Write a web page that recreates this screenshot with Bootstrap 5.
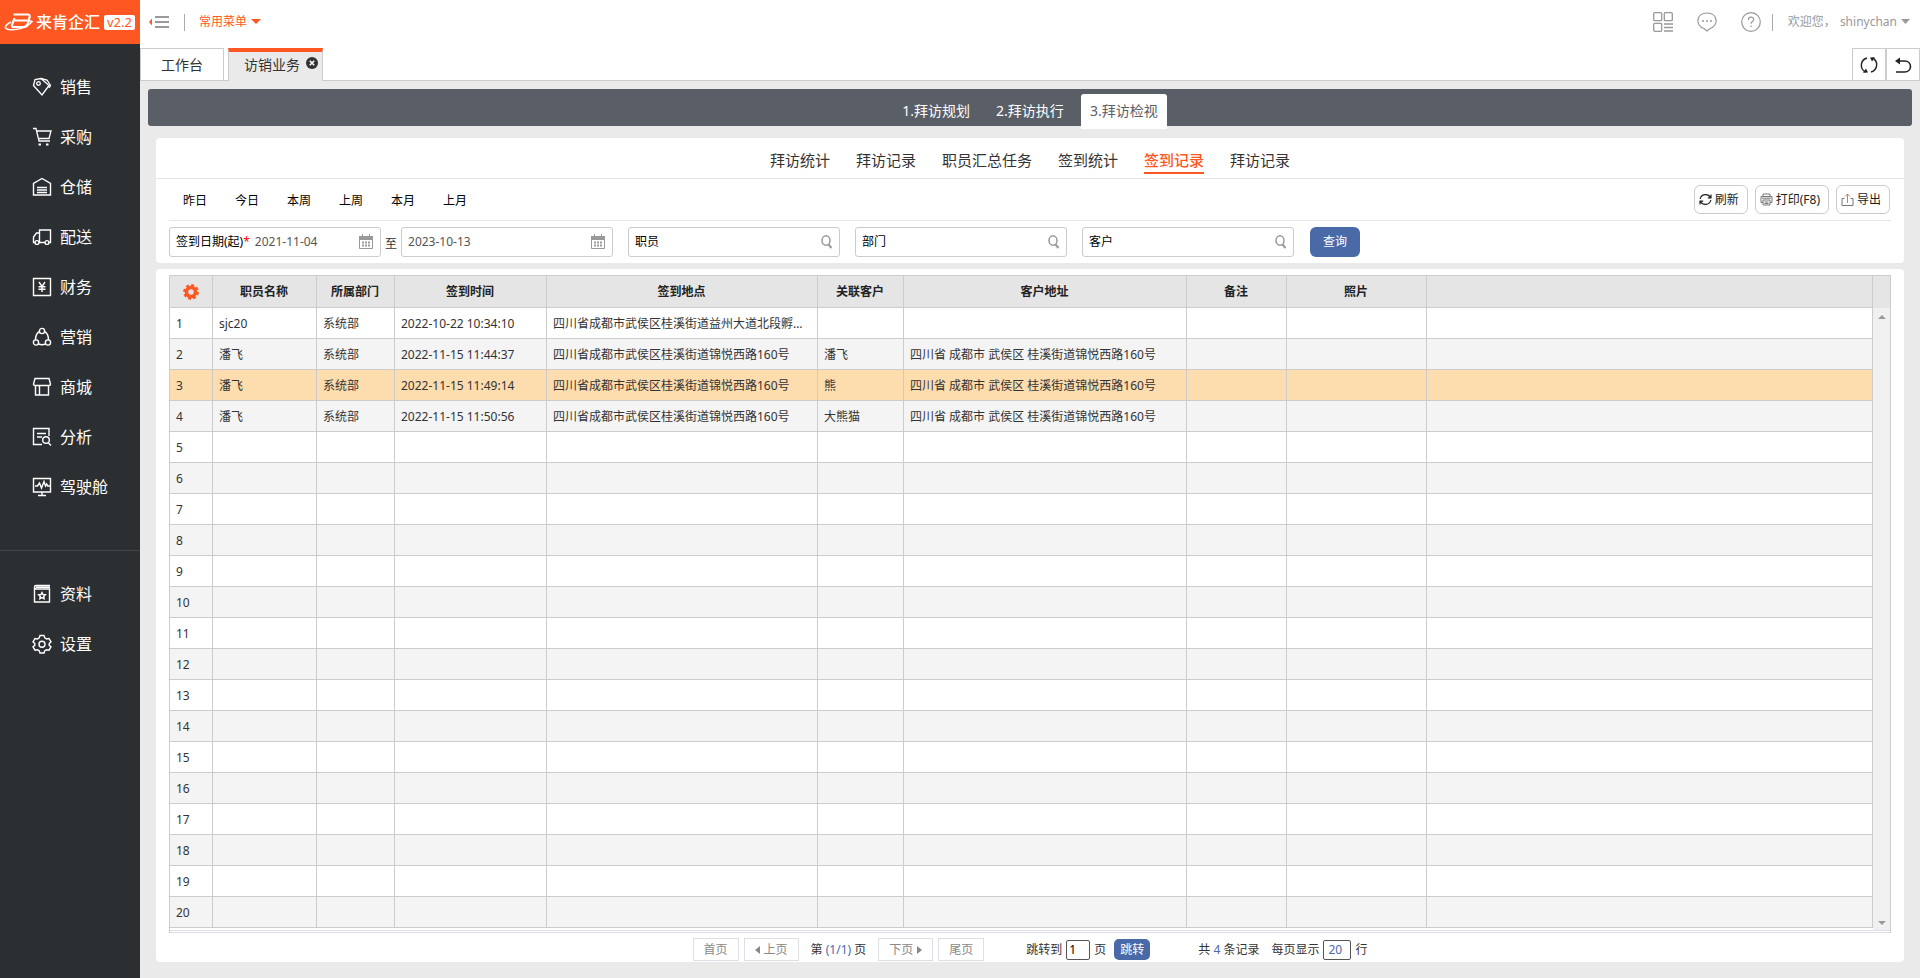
<!DOCTYPE html>
<html lang="zh-CN">
<head>
<meta charset="utf-8">
<meta name="viewport" content="width=device-width, initial-scale=1">
<title>签到记录</title>
<link href="https://cdn.jsdelivr.net/npm/bootstrap@5.3.0/dist/css/bootstrap.min.css" rel="stylesheet">
<style>
:root{--brand:#ff5722;--line:#ccc;--blue:#4a69a7}
body{font-family:"Noto Sans","Noto Sans CJK SC",sans-serif;font-size:12px;line-height:18px;color:#333;background:#eaeaea}
a{color:inherit;text-decoration:none}
svg{display:block;flex:none;fill:none;stroke:currentColor}
.side{width:140px;background:#2b2f32;color:#fff}
.logo{height:44px;background:var(--brand);padding:0 4px 0 4px;white-space:nowrap}
.logo-name{font-size:16px;font-weight:500;margin-left:2px}
.ver{background:#fff;color:var(--brand);border-radius:2px;padding:0 3px;line-height:15px;font-size:13px;margin-left:4px}
.side .nav-link{height:50px;padding:0 0 0 32px;gap:8px;color:#fff;font-size:16px;line-height:24px}
.side-main{padding:18px 0 38px}
.side-extra{border-top:1px solid #414548;padding-top:18px}
.topbar{height:48px;background:#fff;padding:0 10px 12px 9px}
.vr-line{width:1px;height:17px;background:#aaa}
.menu-sep{margin:0 14px 0 15px}
.user-sep{margin:0 15px 0 11px}
.common-menu{color:var(--brand)}
.head-tools{color:#999}
.tabs{height:33px;background:#fff;border-bottom:1px solid var(--line)}
.page-tab{height:33px;font-size:14px;border:1px solid var(--line);color:#333;padding:0 20px}
.page-tab.current{border-top:4px solid var(--brand);border-bottom:0;background:#eaeaea;padding:0 4px 3px 15px;gap:6px}
.tool{width:34px;height:33px;background:#fff;border:1px solid var(--line);padding:0;color:#222}
.steps{height:37px;background:#5a5e66;border-radius:3px;margin:8px 8px 12px;padding-top:5px;color:#fff;font-size:14px}
.steps a{height:32px;line-height:34px;padding:0 9px}
.steps a.current{height:35px;background:#fff;color:#5a5e66;border-radius:3px 3px 0 0}
.panel{background:#fff;border-radius:4px;margin:0 16px}
.subtabs{height:41px;gap:26px;border-bottom:1px solid #e4e4e4;padding-top:12px;font-size:15px}
.subtabs a{height:24px;line-height:20px}
.subtabs a.current{color:var(--brand);font-weight:500;border-bottom:2px solid var(--brand)}
.filters{padding:0 13px 6px}
.quick{height:42px;border-bottom:1px solid #e4e4e4;color:#000;padding:0 1px 0 14px}
.quick-days{gap:28px;padding-top:2px}
.quick-tools{gap:7px}
.query{padding-top:6px}
.tbtn{height:29px;border:1px solid var(--line);border-radius:6px;background:#fff;padding:0 8px 0 4px;gap:3px;color:#222}
.field{width:212px;height:30px;border:1px solid var(--line);border-radius:3px;padding:0 6px;gap:5px;color:#000}
.field svg{color:#999}
.field input{min-width:0;border:0;padding:0;color:#555;outline:0;line-height:18px;background:none}
.lookups{gap:15px;margin-left:15px}
.star{color:#f00}
.go{height:30px;width:50px;background:var(--blue);color:#fff;border:0;border-radius:6px;padding:0}
.grid-panel{padding:6px 13px 1px;margin-top:6px}
.grid-box{border:1px solid var(--line);border-width:1px 1px 0}
.grid-wrap{padding-bottom:2px}
.grid{table-layout:fixed;border-collapse:separate;border-spacing:0;width:100%;line-height:18px}
.grid th,.grid td{height:31px;padding:1px 7px 0 6px;border:solid var(--line);border-width:0 1px 1px 0;overflow:hidden;white-space:nowrap;text-overflow:ellipsis}
.grid th{height:32px;background:#e5e5e5;text-align:center;color:#222;font-weight:700}
.grid tbody tr:nth-child(even){background:#f4f4f4}
.grid tbody tr.picked{background:#fddcae}
.cog{color:var(--brand)}
.gutter{width:17px;flex:none;background:#f0f0f0;border-top:32px solid #e5e5e5;padding:7px 0 5px;color:#999}
.rails{height:3px;border:solid #dcdfe6;border-width:1px 0}
.pager{padding-top:5px;color:#333}
.pg{height:23px;border:1px solid #dcdfe6;background:#fff;color:#888;padding:0 10px;gap:4px}
.gap-s{margin-right:5px}
.page-no{margin:0 12px}
.jump-label{margin:0 4px 0 42px}
.num{border:1px solid #555;border-radius:2px;height:20px;padding:0 2px;background:#fff}
.num-page{width:24px}
.num-size{width:28px;padding-left:4px}
.jump{width:36px;height:21px;border:0;border-radius:5px;background:var(--blue);color:#fff;padding:0}
.ink{color:var(--blue)}
</style>
</head>
<body>
<div class="d-flex min-vh-100">
<aside class="side flex-shrink-0">
  <div class="logo d-flex align-items-center">
    <svg width="30" height="20" viewBox="0 0 30 20" stroke-width="2.2"><path d="M9.500 2.500h14q3 0 2 3l-2 7q-1 2.500-4 2.500h-10q-2 0-1.500-2l2.500-7M10 8.500h14"/><path stroke-width="1.500" d="M7 10c-6 3-8 6.500-2 7.500 6 .8 17-.5 23-8l-3-1"/></svg>
    <span class="logo-name">来肯企汇</span><span class="ver">v2.2</span>
  </div>
  <nav>
    <div class="side-main">
      <a class="nav-link d-flex align-items-center" href="#"><svg width="20" height="20" viewBox="0 0 20 20" stroke-width="1.300"><path d="M1.500 8.500 3 2.500l6-1 8 7-7 9.500z"/><path d="m9 1.500 6 1.500 3.500 5.500-1.500 2.500"/><circle cx="6.500" cy="6.500" r="1.800"/></svg>销售</a>
      <a class="nav-link d-flex align-items-center" href="#"><svg width="20" height="20" viewBox="0 0 20 20" stroke-width="1.300"><path d="M1 1.500h3L7 14h11M4.800 4H19l-2 7.500H6.500"/><path stroke-width="2" d="M6.500 17.500h2.500M14 17.500h2.500"/></svg>采购</a>
      <a class="nav-link d-flex align-items-center" href="#"><svg width="20" height="20" viewBox="0 0 20 20" stroke-width="1.400"><path d="M1.500 18V6.500L10 1.500l8.500 5V18zM5 10.500h10M5 13h10M5 15.500h10"/></svg>仓储</a>
      <a class="nav-link d-flex align-items-center" href="#"><svg width="20" height="20" viewBox="0 0 20 20" stroke-width="1.400"><path d="M7.500 15.500V3h11v12.500h-1.500M7.500 6h-3L1.500 10v5.500h1.500M7 15.500h6"/><circle cx="5" cy="15.500" r="1.900"/><circle cx="15" cy="15.500" r="1.900"/></svg>配送</a>
      <a class="nav-link d-flex align-items-center" href="#"><svg width="20" height="20" viewBox="0 0 20 20" stroke-width="1.400"><path d="M1.500 1.500h17v17h-17zM7 5l3 4.500L13 5M10 9.500V15M6.500 9.700h7M6.500 12.300h7"/></svg>财务</a>
      <a class="nav-link d-flex align-items-center" href="#"><svg width="20" height="20" viewBox="0 0 20 20" stroke-width="1.400"><circle cx="10" cy="4" r="2.600"/><circle cx="4" cy="15.500" r="2.600"/><circle cx="16" cy="15.500" r="2.600"/><path d="M7.500 4.500C4.500 6 3.500 9 3.500 13M12.500 4.500c3 1.500 4 4.500 4 8.500M6.500 17q3.500 1.500 7 0"/></svg>营销</a>
      <a class="nav-link d-flex align-items-center" href="#"><svg width="20" height="20" viewBox="0 0 20 20" stroke-width="1.400"><path d="M3 1.500h14l1.500 5.500q0 1.500-1.500 1.500H3Q1.500 8.500 1.500 7zM3.500 8.500v9.500h13V8.500M7.500 8.500V18"/></svg>商城</a>
      <a class="nav-link d-flex align-items-center" href="#"><svg width="20" height="20" viewBox="0 0 20 20" stroke-width="1.400"><path d="M10 17.500H1.500v-16h15.500V9M5 6.500h9M5 10h5"/><circle cx="14" cy="13" r="3.300"/><path d="m16 15.500 3 3"/></svg>分析</a>
      <a class="nav-link d-flex align-items-center" href="#"><svg width="20" height="20" viewBox="0 0 20 20" stroke-width="1.400"><path d="M1.500 1.500h17V15h-17zM6 18.500h8M10 15v3.500M3 9h2.500L7.500 6 9.500 11 12 4.500 13.500 9l1.200-2 1 2H18"/></svg>驾驶舱</a>
    </div>
    <div class="side-extra">
      <a class="nav-link d-flex align-items-center" href="#"><svg width="20" height="20" viewBox="0 0 20 20" stroke-width="1.400"><path d="M18 1.500H4q-1.500 0-1.500 1.500t1.500 2h13.500V18h-15V3M4 3.200h14"/><path d="m10 8.500 1 2 2.300.3-1.600 1.600.4 2.300-2.100-1.100-2.100 1.100.4-2.300-1.600-1.600 2.300-.3z"/></svg>资料</a>
      <a class="nav-link d-flex align-items-center" href="#"><svg width="20" height="20" viewBox="0 0 20 20" stroke-width="1.400"><path d="M8 1.500h4l.8 2.400 1.700 1L17 4.500l2 3.300L17.200 9.500v1.800l1.800 1.500-2 3.400-2.500-.5-1.700 1-.8 2.300H8l-.8-2.300-1.700-1-2.500.5-2-3.400 1.800-1.500V9.500L1 7.800l2-3.300 2.500.4 1.700-1z"/><circle cx="10" cy="10.200" r="3"/></svg>设置</a>
    </div>
  </nav>
</aside>
<div class="flex-grow-1 overflow-hidden">
  <header class="topbar d-flex align-items-center">
    <div class="d-flex align-items-center pt-2">
      <a href="#" aria-label="收起菜单"><svg width="20" height="14" viewBox="0 0 20 14"><path stroke="#999" stroke-width="2" d="M6 2h14M6 7h14M6 12h14"/><path fill="#ff5722" stroke="none" d="M3 3.500v7L0 7z"/></svg></a>
      <span class="vr-line menu-sep"></span>
      <a href="#" class="common-menu d-flex align-items-center gap-1">常用菜单<svg width="10" height="6"><path fill="currentColor" stroke="none" d="M0 0h10L5 5z"/></svg></a>
    </div>
    <div class="head-tools d-flex align-items-center ms-auto pt-2">
      <a href="#" aria-label="应用" class="me-4"><svg width="20" height="20" stroke-width="1.300"><rect x=".7" y=".7" width="8" height="8" rx="1"/><rect x="11.300" y=".7" width="8" height="8" rx="1"/><rect x=".7" y="11.300" width="8" height="8" rx="1"/><path d="M11 12h9M11 15.500h9M11 19h9"/></svg></a>
      <a href="#" aria-label="消息" class="me-4"><svg width="20" height="20" stroke-width="1.200"><path d="M7 16.500C-2 14-1 1 10 1s12 13 3 15.500l-3 2.500z"/><path stroke-width="1.500" d="M5 9h2M9 9h2M13 9h2"/></svg></a>
      <a href="#" aria-label="帮助"><svg width="20" height="20" stroke-width="1.200"><circle cx="10" cy="10" r="9.300"/><path d="M7.300 8c0-3.800 5.400-3.600 5.400-.4 0 2-2.700 2-2.700 4.200M10 13.500v1.500"/></svg></a>
      <span class="vr-line user-sep"></span>
      <span class="me-1">欢迎您，</span>
      <a href="#" class="d-flex align-items-center gap-1">shinychan<svg width="9" height="6"><path fill="currentColor" stroke="none" d="M0 0h9L4.500 5z"/></svg></a>
    </div>
  </header>
  <div class="tabs d-flex">
    <a href="#" class="page-tab d-flex align-items-center me-1">工作台</a>
    <a href="#" class="page-tab current d-flex align-items-center">访销业务<svg width="12" height="12" class="mb-1"><circle cx="6" cy="6" r="6" fill="#333" stroke="none"/><path stroke="#fff" stroke-width="1.600" d="m3.800 3.800 4.400 4.400m0-4.400L3.800 8.200"/></svg></a>
    <div class="ms-auto d-flex">
      <button class="tool d-flex align-items-center justify-content-center" aria-label="刷新"><svg width="18" height="18" stroke-width="1.400"><path d="M7 2C0 4-.5 13 5.500 16M11 16c7-2 7.500-11 1.500-14"/><path fill="currentColor" stroke="none" d="m3 16.800 5-.2-2-4zM15 1.200l-5 .2 2 4z"/></svg></button>
      <button class="tool d-flex align-items-center justify-content-center" aria-label="返回"><svg width="18" height="18" stroke-width="1.600"><path d="M3 5h7.500c8 0 8 11 0 11H2"/><path fill="currentColor" stroke="none" d="M1 5l5-3.500v7z"/></svg></button>
    </div>
  </div>
  <nav class="steps d-flex justify-content-center">
    <a href="#" class="me-2">1.拜访规划</a><a href="#" class="me-2">2.拜访执行</a><a href="#" class="current">3.拜访检视</a>
  </nav>
  <section class="panel">
    <nav class="subtabs d-flex justify-content-center">
      <a href="#">拜访统计</a><a href="#">拜访记录</a><a href="#">职员汇总任务</a><a href="#">签到统计</a><a href="#" class="current">签到记录</a><a href="#">拜访记录</a>
    </nav>
    <div class="filters">
      <div class="quick d-flex align-items-center">
        <div class="quick-days d-flex"><a href="#">昨日</a><a href="#">今日</a><a href="#">本周</a><a href="#">上周</a><a href="#">本月</a><a href="#">上月</a></div>
        <div class="quick-tools d-flex ms-auto">
          <button class="tbtn d-flex align-items-center"><svg width="13" height="13" stroke-width="1.200"><path d="M11.500 4.500C9 0 2 1 1.200 6M1.500 8.500c2.500 4.500 9.500 3.500 10.300-1.500M12 1.500v3.300H8.800M1 11.500V8.200h3.200"/></svg>刷新</button>
          <button class="tbtn d-flex align-items-center"><svg width="13" height="13"><path stroke="#777" d="M3 3.500V1h7v2.500M3 9.500H1v-6h11v6h-2M3 7h7v5H3zM4.500 9h4M4.500 10.500h4M2 5.200h9"/></svg>打印(F8)</button>
          <button class="tbtn d-flex align-items-center"><svg width="13" height="13"><path stroke="#777" d="M3.500 5.500H1v7h11v-7H9.500"/><path stroke="#b98560" d="M6.500 10V1M4 3.500 6.500 1 9 3.500"/></svg>导出</button>
        </div>
      </div>
      <div class="query d-flex align-items-center">
        <div class="field d-flex align-items-center"><label for="from" class="text-nowrap">签到日期(起)<span class="star">*</span></label><input id="from" class="flex-grow-1" value="2021-11-04"><svg width="16" height="16"><path fill="currentColor" stroke="none" d="M1 2h14v4H1z"/><path d="M1.500 2.500h13v12h-13zM4.500 0v3M11.500 0v3"/><path stroke-width="2" stroke-dasharray="2 1" d="M4 8.500h8M4 11.500h8"/></svg></div>
        <label for="to" class="px-1 pt-1">至</label>
        <div class="field d-flex align-items-center"><input id="to" class="flex-grow-1" value="2023-10-13"><svg width="16" height="16"><path fill="currentColor" stroke="none" d="M1 2h14v4H1z"/><path d="M1.500 2.500h13v12h-13zM4.500 0v3M11.500 0v3"/><path stroke-width="2" stroke-dasharray="2 1" d="M4 8.500h8M4 11.500h8"/></svg></div>
        <div class="lookups d-flex">
          <div class="field d-flex align-items-center"><label for="staff" class="text-nowrap">职员</label><input id="staff" class="flex-grow-1"><svg width="13" height="14" stroke-width="1.500"><ellipse cx="6" cy="5.500" rx="4" ry="4.700"/><path stroke-width="2" d="m8.500 9.500 3 3.500"/></svg></div>
          <div class="field d-flex align-items-center"><label for="dept" class="text-nowrap">部门</label><input id="dept" class="flex-grow-1"><svg width="13" height="14" stroke-width="1.500"><ellipse cx="6" cy="5.500" rx="4" ry="4.700"/><path stroke-width="2" d="m8.500 9.500 3 3.500"/></svg></div>
          <div class="field d-flex align-items-center"><label for="cust" class="text-nowrap">客户</label><input id="cust" class="flex-grow-1"><svg width="13" height="14" stroke-width="1.500"><ellipse cx="6" cy="5.500" rx="4" ry="4.700"/><path stroke-width="2" d="m8.500 9.500 3 3.500"/></svg></div>
        </div>
        <button class="go ms-3">查询</button>
      </div>
    </div>
  </section>
  <section class="panel grid-panel">
    <div class="grid-box">
      <div class="d-flex">
        <div class="grid-wrap flex-grow-1 overflow-hidden">
        <table class="grid">
          <colgroup><col style="width:43px"><col style="width:104px"><col style="width:78px"><col style="width:152px"><col style="width:271px"><col style="width:86px"><col style="width:283px"><col style="width:100px"><col style="width:140px"><col></colgroup>
          <thead><tr><th><svg class="cog mx-auto" width="16" height="16" viewBox="0 0 16 16"><circle cx="8" cy="8" r="4.500" stroke-width="3.600"/><circle cx="8" cy="8" r="6.800" stroke-width="2.200" stroke-dasharray="3 2.340"/></svg></th><th>职员名称</th><th>所属部门</th><th>签到时间</th><th>签到地点</th><th>关联客户</th><th>客户地址</th><th>备注</th><th>照片</th><th></th></tr></thead>
          <tbody>
          <tr><td>1</td><td>sjc20</td><td>系统部</td><td>2022-10-22 10:34:10</td><td>四川省成都市武侯区桂溪街道益州大道北段孵化园</td><td></td><td></td><td></td><td></td><td></td></tr>
          <tr><td>2</td><td>潘飞</td><td>系统部</td><td>2022-11-15 11:44:37</td><td>四川省成都市武侯区桂溪街道锦悦西路160号</td><td>潘飞</td><td>四川省 成都市 武侯区 桂溪街道锦悦西路160号</td><td></td><td></td><td></td></tr>
          <tr class="picked"><td>3</td><td>潘飞</td><td>系统部</td><td>2022-11-15 11:49:14</td><td>四川省成都市武侯区桂溪街道锦悦西路160号</td><td>熊</td><td>四川省 成都市 武侯区 桂溪街道锦悦西路160号</td><td></td><td></td><td></td></tr>
          <tr><td>4</td><td>潘飞</td><td>系统部</td><td>2022-11-15 11:50:56</td><td>四川省成都市武侯区桂溪街道锦悦西路160号</td><td>大熊猫</td><td>四川省 成都市 武侯区 桂溪街道锦悦西路160号</td><td></td><td></td><td></td></tr>
          <tr><td>5</td><td></td><td></td><td></td><td></td><td></td><td></td><td></td><td></td><td></td></tr>
          <tr><td>6</td><td></td><td></td><td></td><td></td><td></td><td></td><td></td><td></td><td></td></tr>
          <tr><td>7</td><td></td><td></td><td></td><td></td><td></td><td></td><td></td><td></td><td></td></tr>
          <tr><td>8</td><td></td><td></td><td></td><td></td><td></td><td></td><td></td><td></td><td></td></tr>
          <tr><td>9</td><td></td><td></td><td></td><td></td><td></td><td></td><td></td><td></td><td></td></tr>
          <tr><td>10</td><td></td><td></td><td></td><td></td><td></td><td></td><td></td><td></td><td></td></tr>
          <tr><td>11</td><td></td><td></td><td></td><td></td><td></td><td></td><td></td><td></td><td></td></tr>
          <tr><td>12</td><td></td><td></td><td></td><td></td><td></td><td></td><td></td><td></td><td></td></tr>
          <tr><td>13</td><td></td><td></td><td></td><td></td><td></td><td></td><td></td><td></td><td></td></tr>
          <tr><td>14</td><td></td><td></td><td></td><td></td><td></td><td></td><td></td><td></td><td></td></tr>
          <tr><td>15</td><td></td><td></td><td></td><td></td><td></td><td></td><td></td><td></td><td></td></tr>
          <tr><td>16</td><td></td><td></td><td></td><td></td><td></td><td></td><td></td><td></td><td></td></tr>
          <tr><td>17</td><td></td><td></td><td></td><td></td><td></td><td></td><td></td><td></td><td></td></tr>
          <tr><td>18</td><td></td><td></td><td></td><td></td><td></td><td></td><td></td><td></td><td></td></tr>
          <tr><td>19</td><td></td><td></td><td></td><td></td><td></td><td></td><td></td><td></td><td></td></tr>
          <tr><td>20</td><td></td><td></td><td></td><td></td><td></td><td></td><td></td><td></td><td></td></tr>
          </tbody>
        </table>
        </div>
        <div class="gutter d-flex flex-column justify-content-between align-items-center">
          <svg width="8" height="4"><path fill="currentColor" stroke="none" d="M0 4h8L4 0z"/></svg>
          <svg width="8" height="4"><path fill="currentColor" stroke="none" d="M0 0h8L4 4z"/></svg>
        </div>
      </div>
      <div class="rails"></div>
    </div>
    <div class="pager d-flex justify-content-center align-items-center">
      <button class="pg gap-s">首页</button>
      <button class="pg d-flex align-items-center"><svg width="5" height="8"><path fill="currentColor" stroke="none" d="M5 0v8L0 4z"/></svg>上页</button>
      <span class="page-no">第 <span class="ink">(1/1)</span> 页</span>
      <button class="pg gap-s d-flex align-items-center">下页<svg width="5" height="8"><path fill="currentColor" stroke="none" d="M0 0v8l5-4z"/></svg></button>
      <button class="pg">尾页</button>
      <label for="jump" class="jump-label">跳转到</label><input id="jump" class="num num-page" value="1"><span class="mx-1">页</span>
      <button class="jump ms-1 me-5">跳转</button>
      <span class="me-2 pe-1">共 <span class="ink">4</span> 条记录</span>
      <label for="size" class="me-1">每页显示</label><input id="size" class="num num-size ink" value="20"><span class="ms-1">行</span>
    </div>
  </section>
</div>
</div>
<script src="https://cdn.jsdelivr.net/npm/bootstrap@5.3.0/dist/js/bootstrap.bundle.min.js"></script>
</body>
</html>
